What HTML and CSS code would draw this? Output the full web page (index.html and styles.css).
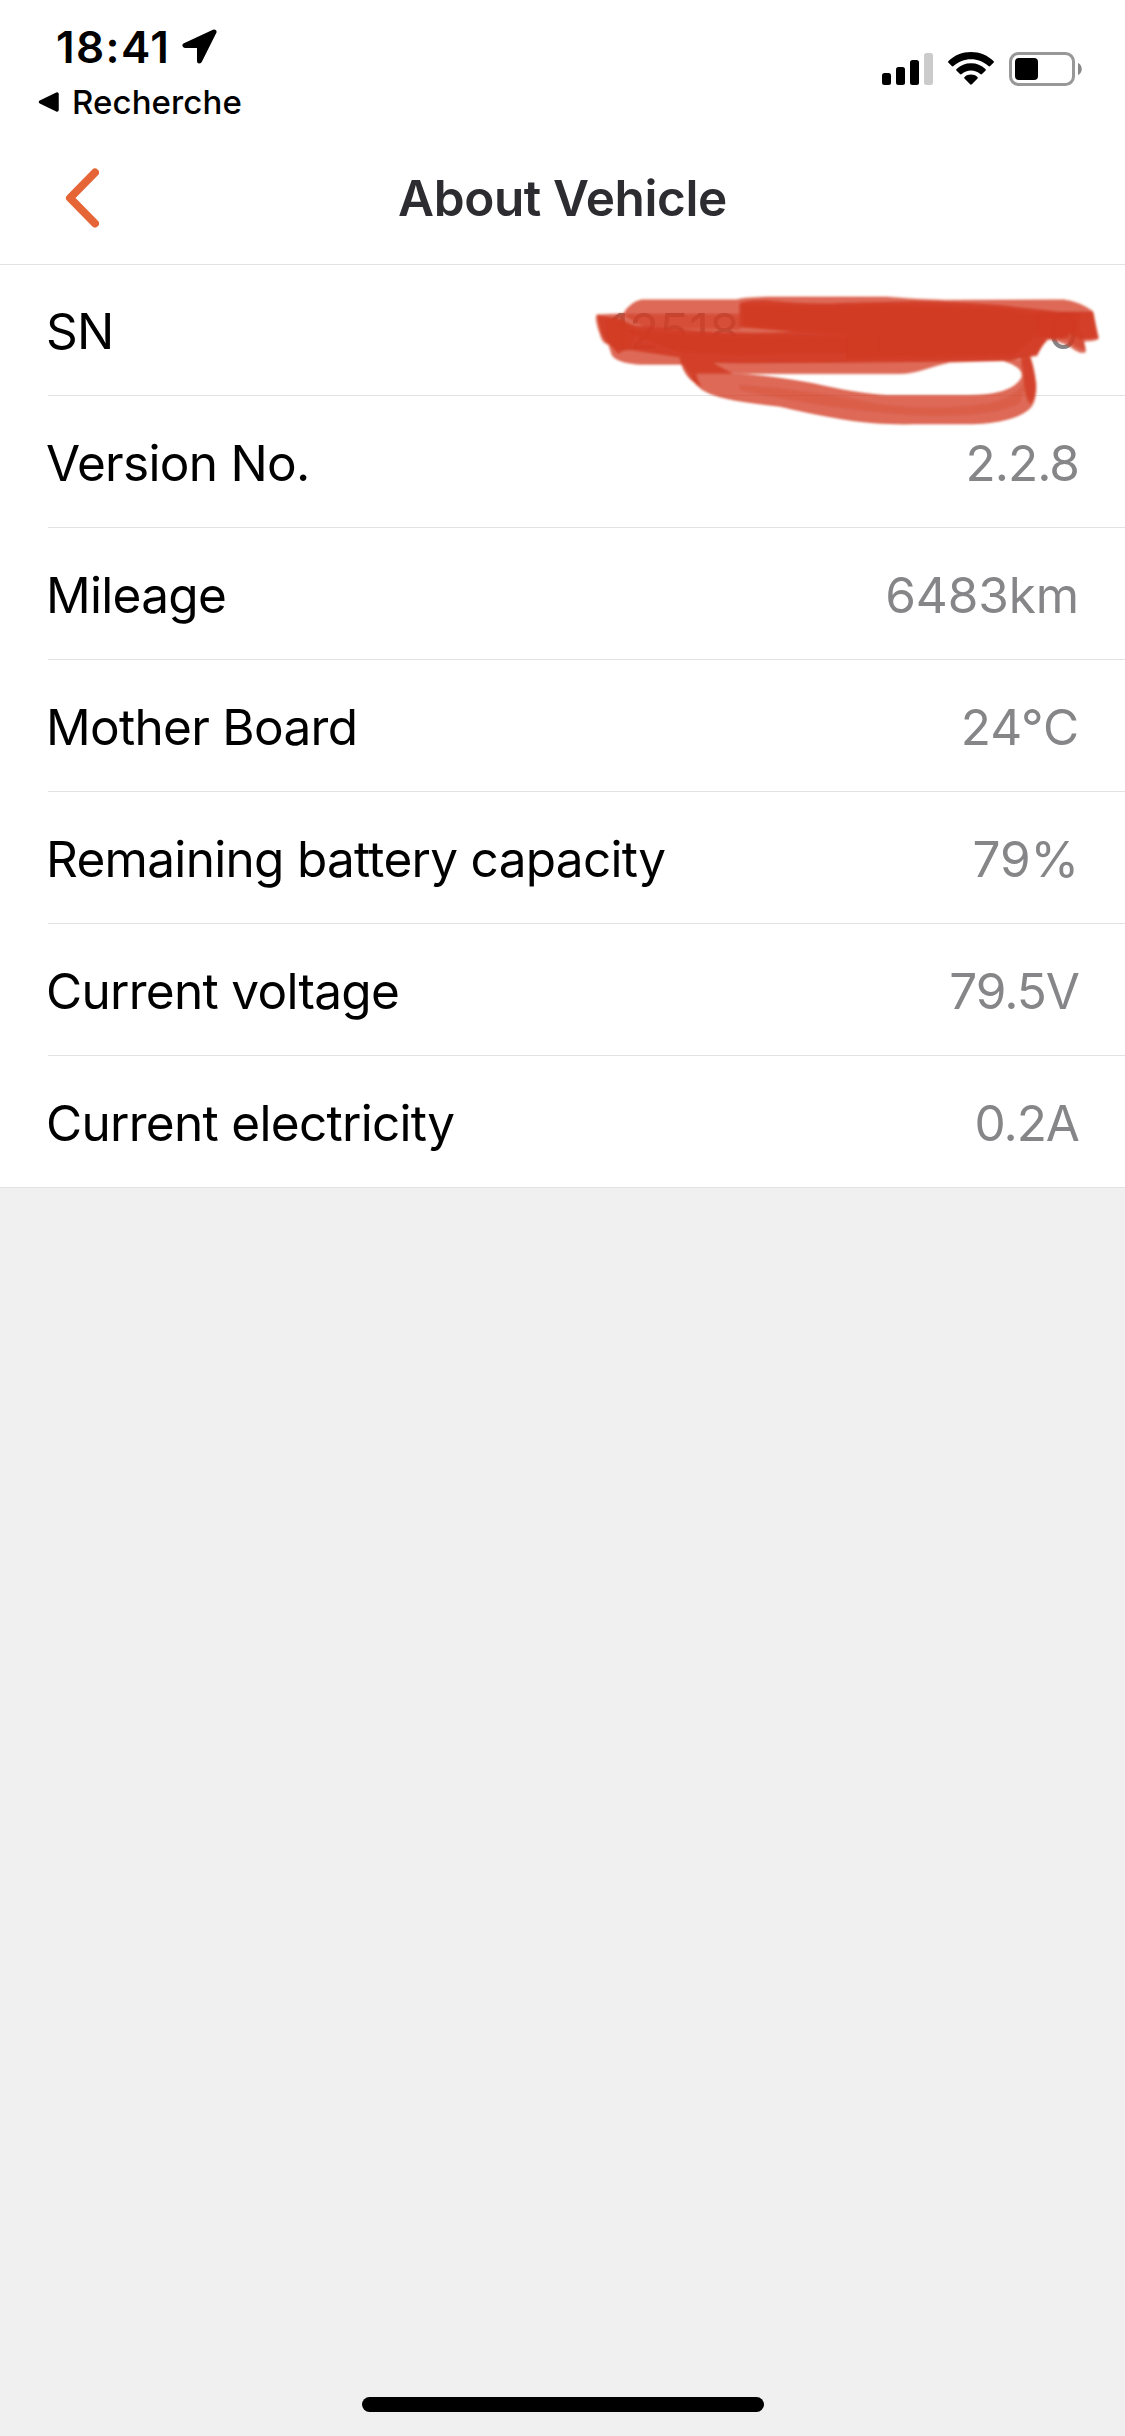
FILE: index.html
```
<!DOCTYPE html>
<html lang="en">
<head>
  <meta charset="UTF-8">
  <meta name="viewport" content="width=device-width, initial-scale=1.0">
  <title>About Vehicle</title>
  <link rel="stylesheet" href="styles.css">
</head>
<body>
  <div class="screen">
    <div class="status-bar">
      <div class="status-left">
        <div class="time">
          <span>18:41</span>
          <svg class="location" width="36" height="36" viewBox="0 0 36 36">
            <path d="M32 3 L3 16.5 H17.5 V32 Z" fill="#000" stroke="#000" stroke-width="5" stroke-linejoin="round"/>
          </svg>
        </div>
        <div class="back-app">
          <svg width="22" height="22" viewBox="0 0 22 22">
            <path d="M2.5 11 L19 3 V19 Z" fill="#000" stroke="#000" stroke-width="3.5" stroke-linejoin="round"/>
          </svg>
          <span>Recherche</span>
        </div>
      </div>
      <div class="status-right">
        <svg width="51" height="34" viewBox="0 0 51 34">
          <rect x="0" y="21" width="9" height="12" rx="2.5"/>
          <rect x="14" y="15" width="9" height="18" rx="2.5"/>
          <rect x="28" y="8" width="9" height="25" rx="2.5"/>
          <rect x="42" y="1" width="9" height="32" rx="2.5" fill="#cbcbcb"/>
        </svg>
        <svg class="wifi" width="46" height="34" viewBox="0 0 46 34">
          <path d="M23 0 C31.500 0 39.500 3.200 45.500 9 C46.100 9.600 46.100 10.200 45.500 10.800 L42.200 14.100 C41.700 14.600 41 14.600 40.500 14.100 C35.700 9.700 29.500 7.200 23 7.200 C16.500 7.200 10.300 9.700 5.500 14.100 C5 14.600 4.300 14.600 3.800 14.100 L0.500 10.800 C-0.100 10.200 -0.100 9.600 0.500 9 C6.500 3.200 14.500 0 23 0 Z"/>
          <path d="M23 11.200 C28.500 11.200 33.500 13.200 37.400 16.900 C38 17.500 38 18.100 37.400 18.700 L34 22 C33.500 22.500 32.800 22.500 32.300 22 C29.700 19.700 26.500 18.400 23 18.400 C19.500 18.400 16.300 19.700 13.700 22 C13.200 22.500 12.500 22.500 12 22 L8.600 18.700 C8 18.100 8 17.500 8.600 16.900 C12.500 13.200 17.500 11.200 23 11.200 Z"/>
          <path d="M23 22.600 C25.400 22.600 27.600 23.400 29.400 24.900 C30 25.400 30 26 29.500 26.600 L23.900 32.200 C23.300 32.800 22.700 32.800 22.100 32.200 L16.500 26.600 C16 26 16 25.400 16.600 24.900 C18.400 23.400 20.600 22.600 23 22.600 Z"/>
        </svg>
        <svg class="battery" width="74" height="34" viewBox="0 0 74 34">
          <rect x="1.500" y="1.500" width="63" height="31" rx="8" fill="none" stroke="#989898" stroke-width="3"/>
          <rect x="6" y="6" width="23" height="22" rx="4"/>
          <path d="M69 11 C74 13 74 21 69 23 Z" fill="#888"/>
        </svg>
      </div>
    </div>

    <div class="nav-bar">
      <svg class="nav-back" width="34" height="60" viewBox="0 0 34 60">
        <path d="M30 4.500 L5 30 L30 55.500" fill="none" stroke="#e66536" stroke-width="8" stroke-linecap="round" stroke-linejoin="round"/>
      </svg>
      <h1 class="title">About Vehicle</h1>
    </div>

    <div class="list">
      <div class="row">
        <span class="label">SN</span>
        <span class="value serial"><span>12518</span><span>0</span></span>
        <svg class="scribble" width="540" height="160" viewBox="0 0 1620 480">
          <defs>
            <filter id="soft" x="-2%" y="-5%" width="104%" height="110%">
              <feGaussianBlur stdDeviation="3"/>
            </filter>
          </defs>
          <g fill="#d23a21" filter="url(#soft)">
            <!-- wide translucent pass -->
            <path opacity=".76" d="M50 103 L130 100 Q150 65 185 58 L470 58 Q490 52 560 50 L920 50 Q1010 58 1100 60 L1450 58 Q1500 65 1537 92 L1557 175 Q1550 184 1512 184 L1518 215 Q1505 228 1470 200 Q1430 180 1405 179 Q1380 200 1372 228 L1345 232 L1290 242 L1110 247 Q1070 256 1030 270 Q990 282 960 282 L330 282 L310 254 L180 254 Q110 250 95 225 L85 195 Q66 190 60 165 Q42 115 50 103 Z"/>
            <!-- loop underneath -->
            <path opacity=".76" d="M330 282 Q340 320 385 340 Q440 365 600 380 Q760 418 880 430 Q930 434 1000 433 L1180 433 Q1300 427 1345 390 Q1372 370 1368 310 Q1362 260 1350 230 L1325 238 L1270 243 Q1330 262 1325 290 Q1300 345 1160 345 L920 345 Q840 342 700 310 Q560 285 480 282 Z"/>
            <path opacity=".25" d="M480 315 Q700 330 880 370 Q1050 395 1230 370 Q1310 350 1340 300 L1320 370 Q1230 415 1000 405 Q760 390 480 330 Z"/>
            <path opacity=".6" d="M125 102 L480 102 L480 148 L200 145 Z"/>
            <!-- dense strokes -->
            <path opacity=".86" d="M52 106 L125 118 Q150 142 210 140 L320 150 Q480 163 640 155 L520 145 L478 142 L478 72 Q490 60 560 61 Q700 75 780 69 L1000 64 Q1200 68 1300 80 L1440 95 L1540 95 L1553 175 L1500 178 L1470 160 L1455 178 L1400 176 L1372 222 L1340 230 L1290 242 L1080 245 L780 248 L480 250 L400 248 Q420 262 460 281 L350 281 Q350 300 365 320 Q312 300 298 232 L150 210 Q125 210 115 222 L85 190 Q62 180 52 106 Z"/>
            <path opacity=".6" d="M75 120 L125 118 L165 150 L150 205 L110 205 L85 185 Z"/>
            <path opacity=".86" d="M125 150 Q300 165 500 168 L900 170 L900 215 L480 225 L300 215 Z"/>
            <path opacity=".86" d="M490 75 Q700 85 900 76 L1280 88 L1380 105 L1370 165 L1300 225 L800 235 L800 165 L490 138 Z"/>
            <path opacity=".75" d="M1370 98 L1500 98 L1495 150 L1440 172 L1370 170 Z"/>
            <path opacity=".8" d="M1322 232 L1350 228 Q1362 260 1368 310 Q1370 350 1352 372 Q1335 360 1330 290 Z"/>
            <path opacity=".6" d="M1456 155 L1500 150 L1512 184 L1516 210 Q1490 205 1460 180 Z"/>
          </g>
        </svg>
      </div>
      <div class="row">
        <span class="label">Version No.</span>
        <span class="value decimal">2.2.8</span>
      </div>
      <div class="row">
        <span class="label">Mileage</span>
        <span class="value">6483km</span>
      </div>
      <div class="row">
        <span class="label">Mother Board</span>
        <span class="value">24°C</span>
      </div>
      <div class="row">
        <span class="label">Remaining battery capacity</span>
        <span class="value">79%</span>
      </div>
      <div class="row">
        <span class="label">Current voltage</span>
        <span class="value decimal">79.5V</span>
      </div>
      <div class="row">
        <span class="label">Current electricity</span>
        <span class="value decimal">0.2A</span>
      </div>
    </div>

    <div class="home-indicator"></div>
  </div>
</body>
</html>
```
FILE: styles.css
```
* {
  box-sizing: border-box;
}

body {
  margin: 0;
  font-family: Inter, "Liberation Sans", sans-serif;
  background: #f0f0f0;
  color: #000;
}

svg {
  display: block;
  flex-shrink: 0;
}

.screen {
  display: flex;
  flex-direction: column;
  width: 1125px;
  height: 2436px;
}

/* status bar */
.status-bar {
  display: flex;
  justify-content: space-between;
  height: 132px;
  padding: 22px 42px 0 38px;
  background: #fff;
}

.time {
  display: flex;
  align-items: center;
  height: 50px;
  padding-left: 18px;
  font-size: 44px;
  font-weight: 600;
  letter-spacing: 1.4px;
}

.location {
  margin-left: 12px;
}

.back-app {
  display: flex;
  align-items: center;
  gap: 12px;
  height: 34px;
  margin-top: 13px;
  font-size: 33px;
  font-weight: 500;
  letter-spacing: 0.1px;
}

.status-right {
  display: flex;
  align-items: flex-start;
  padding-top: 30px;
}

.wifi {
  margin-left: 15px;
}

.battery {
  margin-left: 15px;
}

/* navigation */
.nav-bar {
  display: grid;
  grid-template-columns: 200px 1fr 200px;
  align-items: center;
  height: 133px;
  border-bottom: 1px solid #e2e2e2;
  background: #fff;
}

.nav-back {
  margin-left: 65px;
}

.title {
  margin: 0;
  text-align: center;
  font-size: 49.5px;
  font-weight: 600;
  letter-spacing: -0.4px;
  color: #2d2d31;
}

/* list */
.list {
  background: #fff;
  border-bottom: 1px solid #e2e2e2;
}

.row {
  position: relative;
  display: flex;
  align-items: center;
  justify-content: space-between;
  height: 132px;
  margin-left: 48px;
  padding: 3px 46px 0 0;
  border-bottom: 1px solid #e2e2e2;
  font-size: 49.5px;
}

.row:first-child {
  height: 131px;
  padding-top: 2px;
}

.row:last-child {
  height: 131px;
  border-bottom: none;
}

.label {
  margin-left: -2px;
  letter-spacing: -0.7px;
}

.value {
  color: #868688;
  letter-spacing: -0.1px;
}

.decimal {
  letter-spacing: -1px;
}

.serial {
  display: flex;
  justify-content: space-between;
  width: 470px;
}

.scribble {
  position: absolute;
  top: 15px;
  right: 5px;
}

.home-indicator {
  width: 402px;
  height: 15px;
  margin: auto auto 24px;
  border-radius: 8px;
  background: #000;
}
```
